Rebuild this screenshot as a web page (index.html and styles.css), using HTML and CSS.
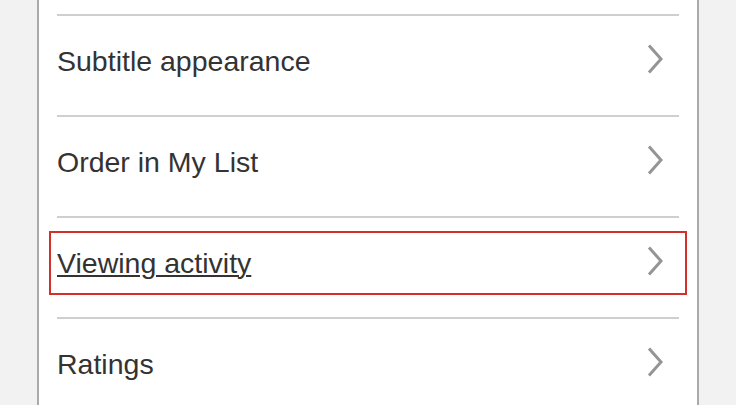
FILE: index.html
```html
<!DOCTYPE html>
<html lang="en">
<head>
<meta charset="utf-8">
<title>Settings</title>
<link rel="stylesheet" href="styles.css">
</head>
<body>
<div class="page">
  <div class="panel">
    <ul class="menu">
      <li class="menu-item">
        <a class="menu-link" href="#">
          <span class="menu-label">Subtitle appearance</span>
          <svg class="chevron" viewBox="0 0 16 30" width="16" height="30" aria-hidden="true"><polyline points="2,1.5 14,15 2,28.5"/></svg>
        </a>
      </li>
      <li class="menu-item">
        <a class="menu-link" href="#">
          <span class="menu-label">Order in My List</span>
          <svg class="chevron" viewBox="0 0 16 30" width="16" height="30" aria-hidden="true"><polyline points="2,1.5 14,15 2,28.5"/></svg>
        </a>
      </li>
      <li class="menu-item">
        <a class="menu-link is-focused" href="#">
          <span class="menu-label">Viewing activity</span>
          <svg class="chevron" viewBox="0 0 16 30" width="16" height="30" aria-hidden="true"><polyline points="2,1.5 14,15 2,28.5"/></svg>
        </a>
      </li>
      <li class="menu-item">
        <a class="menu-link" href="#">
          <span class="menu-label">Ratings</span>
          <svg class="chevron" viewBox="0 0 16 30" width="16" height="30" aria-hidden="true"><polyline points="2,1.5 14,15 2,28.5"/></svg>
        </a>
      </li>
    </ul>
  </div>
</div>
</body>
</html>
```

FILE: styles.css
```css
html, body {
  margin: 0;
  padding: 0;
  background: #ffffff;
}

body {
  width: 736px;
  height: 414px;
  overflow: hidden;
  font-family: "Liberation Sans", Arial, Helvetica, sans-serif;
}

.page {
  height: 405px;
  background: #f2f2f2;
  display: flex;
  padding-left: 37px;
  overflow: hidden;
}

.panel {
  width: 622px;
  height: 405px;
  background: #ffffff;
  border-left: 2px solid #aaaaaa;
  border-right: 2px solid #aaaaaa;
  padding: 14px 18px 0;
  overflow: hidden;
}

.menu {
  list-style: none;
  margin: 0;
  padding: 0;
}

.menu-item {
  border-top: 2px solid #cfcfcf;
  padding: 21px 0 30px;
}

.menu-link {
  display: flex;
  align-items: center;
  justify-content: space-between;
  height: 48px;
  padding-right: 16px;
  color: #333333;
  text-decoration: none;
}

.menu-label {
  font-size: 28.5px;
  line-height: 48px;
  white-space: nowrap;
}

.menu-link.is-focused {
  outline: 2px solid #d3302c;
  outline-offset: 6px;
}

.menu-link.is-focused .menu-label {
  text-decoration: underline;
  text-decoration-thickness: 1.5px;
  text-underline-offset: 2px;
}

.chevron {
  display: block;
  margin-top: -4px;
  fill: none;
  stroke: #959595;
  stroke-width: 3;
  stroke-linecap: butt;
  stroke-linejoin: miter;
}
```
